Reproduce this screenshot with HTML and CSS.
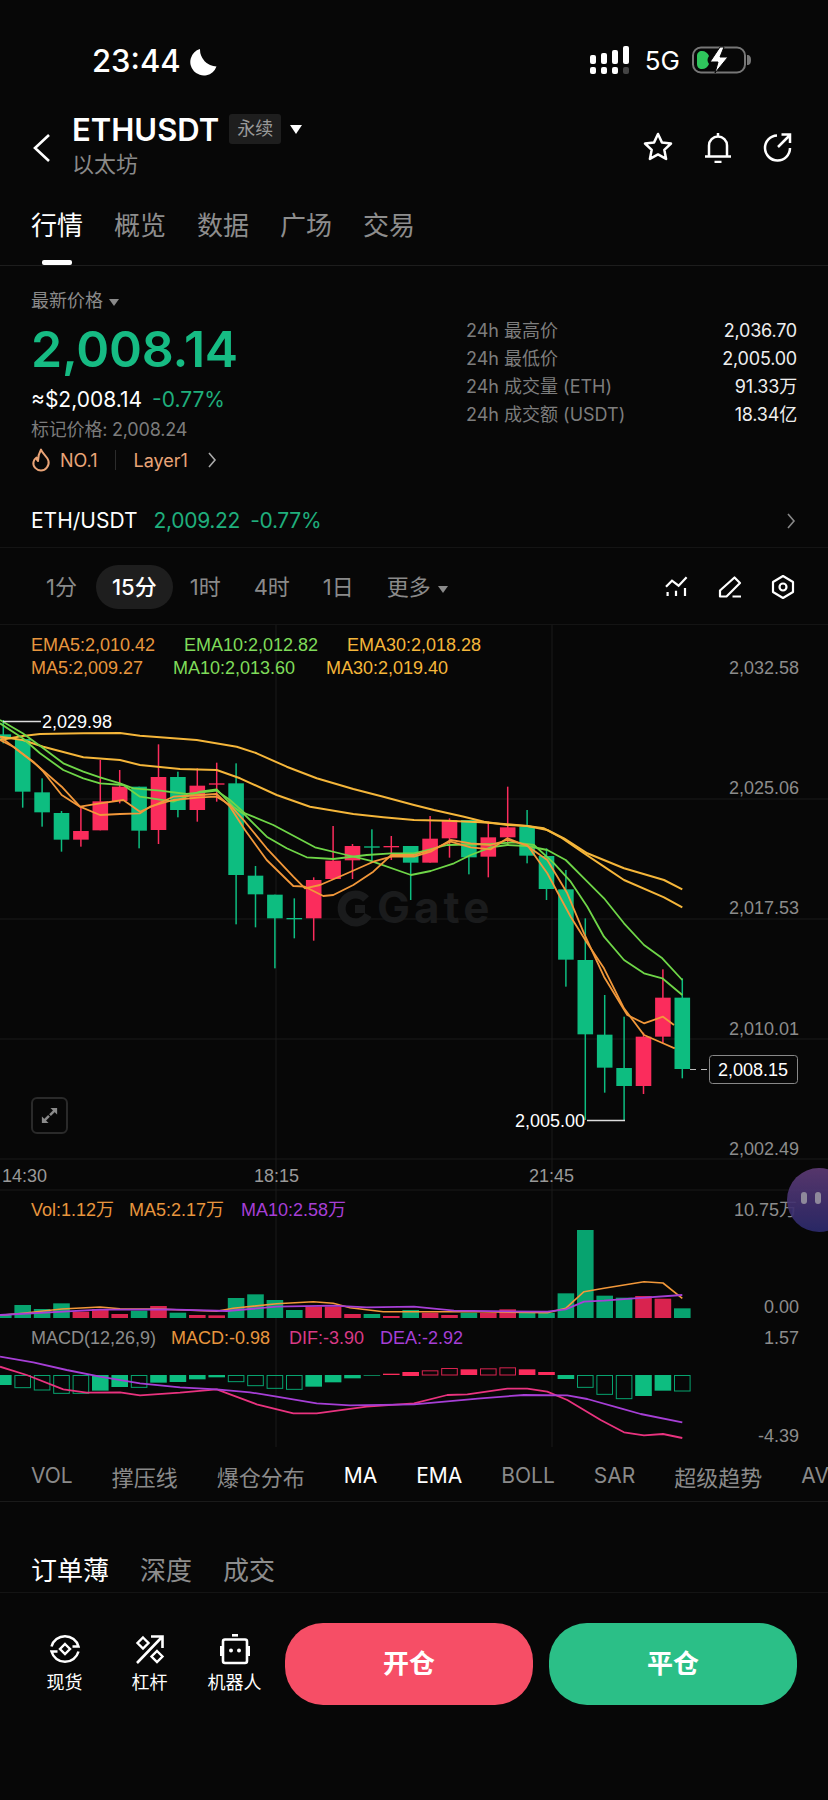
FILE: index.html
```html
<!DOCTYPE html>
<html lang="zh-CN">
<head>
  <meta charset="UTF-8">
  <meta name="viewport" content="width=device-width, initial-scale=1.0">
  <title>ETHUSDT</title>
  <link rel="stylesheet" href="styles.css">
</head>
<body>
  <div class="status-bar">
    <div class="status-time">
      <span>23:44</span>
      <svg class="moon" viewBox="0 0 28 28"><path d="M11 1A13.500 13.500 0 1 0 27.500 18.500 17 17 0 0 1 11 1z" fill="#fff"/></svg>
    </div>
    <div class="status-right">
      <svg class="signal" viewBox="0 0 42 28" fill="#fff">
        <rect x="0" y="9" width="6" height="9" rx="2"/><rect x="11" y="7" width="6" height="11" rx="2"/><rect x="22" y="4" width="6" height="14" rx="2"/><rect x="33" y="0" width="6" height="18" rx="2"/>
        <rect x="0" y="21" width="6" height="7" rx="2"/><rect x="11" y="21" width="6" height="7" rx="2"/><rect x="22" y="21" width="6" height="7" rx="2"/><rect x="33" y="21" width="6" height="7" rx="2" fill="#444"/>
      </svg>
      <span class="net">5G</span>
      <svg class="battery" viewBox="0 0 60 28">
        <rect x="1" y="1.500" width="52" height="25" rx="8" fill="none" stroke="#777" stroke-width="2"/>
        <path d="M53 9c3 0 4 2 4 5s-1 5-4 5" fill="#777" transform="translate(2 0)"/>
        <path d="M5 10c0-3 2-5 5-5s6 2 7 5c-2 3-2 5 0 8-1 3-4 5-7 5s-5-2-5-5z" fill="#2fc65c"/>
        <path d="M28 1 18 16h8l-3 11 13-16h-8l4-10z" fill="#fff" stroke="#070707" stroke-width="1"/>
      </svg>
    </div>
  </div>

  <div class="top-nav">
    <svg class="back" viewBox="0 0 20 30"><path d="M17 2 3 15l14 13" fill="none" stroke="#fff" stroke-width="2.600"/></svg>
    <div class="title-block">
      <div class="title-row">
        <span class="symbol">ETHUSDT</span>
        <span class="badge">永续</span>
        <span class="caret-big"></span>
      </div>
      <div class="subtitle">以太坊</div>
    </div>
    <div class="nav-icons">
      <svg viewBox="0 0 32 32"><path d="M16 3l3.900 8.400 9.100 1.100-6.700 6.300 1.800 9.100-8.100-4.500-8.100 4.500 1.800-9.100L3 12.500l9.100-1.100z" fill="none" stroke="#fff" stroke-width="2.500" stroke-linejoin="round"/></svg>
      <svg viewBox="0 0 32 32"><path d="M7 25V14.500a9 9 0 0 1 18 0V25M3 25.500h26M12.500 31h7M16 2v3" fill="none" stroke="#fff" stroke-width="2.500"/></svg>
      <svg viewBox="0 0 32 32"><path d="M15 4.500A12.500 12.500 0 1 0 28 17M16 16 27 5M19.500 3.500h8.500v8.500" fill="none" stroke="#fff" stroke-width="2.500"/></svg>
    </div>
  </div>

  <div class="tabs">
    <div class="tab active">行情</div>
    <div class="tab">概览</div>
    <div class="tab">数据</div>
    <div class="tab">广场</div>
    <div class="tab">交易</div>
  </div>

  <div class="overview">
    <div class="price-col">
      <div class="muted-label">最新价格 <span class="caret-small"></span></div>
      <div class="last-price">2,008.14</div>
      <div class="usd-row"><span>≈$2,008.14</span><span class="green">-0.77%</span></div>
      <div class="mark-price">标记价格: 2,008.24</div>
      <div class="tag-row">
        <svg class="flame" viewBox="0 0 20 24"><path d="M10 1.500c1 4 6 6.500 7.500 11.500 1 5-3 9.500-7.500 9.500S1.500 18.500 2.500 14c.5-2 1.500-3.500 3-4.500 0 2 .5 3 1.500 3.500C7 9 8 5 10 1.500z" fill="none" stroke="#e9a477" stroke-width="2" stroke-linejoin="round"/></svg>
        <span>NO.1</span>
        <i class="tag-sep"></i>
        <span>Layer1</span>
        <svg class="chev" viewBox="0 0 10 18"><path d="M2 2l6 7-6 7" fill="none" stroke="#aaa" stroke-width="1.600"/></svg>
      </div>
    </div>
    <div class="stats">
      <div class="stat"><span>24h 最高价</span><b>2,036.70</b></div>
      <div class="stat"><span>24h 最低价</span><b>2,005.00</b></div>
      <div class="stat"><span>24h 成交量 (ETH)</span><b>91.33万</b></div>
      <div class="stat"><span>24h 成交额 (USDT)</span><b>18.34亿</b></div>
    </div>
  </div>

  <div class="spot-row">
    <span class="spot-name">ETH/USDT</span>
    <span class="green">2,009.22</span>
    <span class="green">-0.77%</span>
    <svg class="chev spot-chev" viewBox="0 0 10 18"><path d="M2 2l6 7-6 7" fill="none" stroke="#888" stroke-width="1.600"/></svg>
  </div>

  <div class="periods">
    <span class="period">1分</span>
    <span class="period on">15分</span>
    <span class="period">1时</span>
    <span class="period">4时</span>
    <span class="period">1日</span>
    <span class="period">更多 <span class="caret-small"></span></span>
    <div class="period-icons">
      <svg viewBox="0 0 24 24"><path d="M1 11.700l6-6 6.600 5 8-8.400M2.600 17v4M11 15.700V21M20 13v8" fill="none" stroke="#fff" stroke-width="2.200"/></svg>
      <svg viewBox="0 0 24 24"><path d="M2 21.500v-6L16.500 2.500l5.500 5.500L8.500 21.500zM14.500 21.500h8.500" fill="none" stroke="#fff" stroke-width="2.200" stroke-linejoin="round"/></svg>
      <svg viewBox="0 0 24 24"><path d="M12 1l10 6v10l-10 6-10-6V7z" fill="none" stroke="#fff" stroke-width="2.200" stroke-linejoin="round"/><circle cx="12" cy="12" r="3.500" fill="none" stroke="#fff" stroke-width="2.200"/></svg>
    </div>
  </div>

  <div class="chart-wrap">
    <svg id="chart" class="chart" viewBox="0 625 828 825">
      <g class="grid">
        <path d="M0 799H828M0 919H828M0 1039H828M0 1159H828M0 1190H828M276 625V1447M552 625V1447"/>
      </g>
      <g class="watermark">
        <path d="M366 899a14 14 0 1 0 2 16" fill="none" stroke="#1a1b1c" stroke-width="8"/>
        <rect x="355" y="905" width="10" height="8" fill="#1a1b1c"/>
        <text x="377" y="923">Gate</text>
      </g>
      <g class="lbl" transform="translate(0 1.500)">
        <text x="31" y="645" fill="#e8963e">EMA5:2,010.42</text>
        <text x="184" y="645" fill="#7fdc5a">EMA10:2,012.82</text>
        <text x="347" y="645" fill="#f5b63a">EMA30:2,018.28</text>
        <text x="31" y="668" fill="#e8963e">MA5:2,009.27</text>
        <text x="173" y="668" fill="#7fdc5a">MA10:2,013.60</text>
        <text x="326" y="668" fill="#f5b63a">MA30:2,019.40</text>

        <text x="31" y="1210" fill="#e8963e">Vol:1.12万</text>
        <text x="129" y="1210" fill="#e8963e">MA5:2.17万</text>
        <text x="241" y="1210" fill="#a63fd6">MA10:2.58万</text>

        <text x="31" y="1338" fill="#8c8c8c">MACD(12,26,9)</text>
        <text x="171" y="1338" fill="#e8963e">MACD:-0.98</text>
        <text x="289" y="1338" fill="#d93a86">DIF:-3.90</text>
        <text x="380" y="1338" fill="#a63fd6">DEA:-2.92</text>

        <text x="2" y="1176" fill="#999">14:30</text>
        <text x="254" y="1176" fill="#999">18:15</text>
        <text x="529" y="1176" fill="#999">21:45</text>

        <g class="axis">
          <text x="799" y="668">2,032.58</text>
          <text x="799" y="788">2,025.06</text>
          <text x="799" y="908">2,017.53</text>
          <text x="799" y="1029">2,010.01</text>
          <text x="799" y="1149">2,002.49</text>
          <text x="797" y="1210">10.75万</text>
          <text x="799" y="1307">0.00</text>
          <text x="799" y="1338">1.57</text>
          <text x="799" y="1436">-4.39</text>
        </g>
      </g>
      <g id="plot"></g>
      <g class="lbl">
        <path d="M3 721.500H41M587 1120.500H625" stroke="#ddd" stroke-width="1.300"/>
        <text x="42" y="723" fill="#fff">2,029.98</text>
        <text x="515" y="1122" fill="#fff">2,005.00</text>
        <path d="M690 1069.500H708" stroke="#bbb" stroke-dasharray="6 5"/>
        <rect x="709.500" y="1055.500" width="88" height="28" rx="3" fill="#070707" stroke="#888"/>
        <text x="753" y="1071" fill="#fff" text-anchor="middle">2,008.15</text>
      </g>
    </svg>
    <div class="expand">
      <svg viewBox="0 0 20 20"><path d="M10.500 9.500l5-5" stroke="#8a8a8a" stroke-width="2.600"/><path d="M11 2h7v7z" fill="#8a8a8a"/><path d="M9.500 10.500l-5 5" stroke="#8a8a8a" stroke-width="2.600"/><path d="M2 11v7h7z" fill="#8a8a8a"/></svg>
    </div>
    <div class="float-ball"><i></i><i></i></div>
  </div>

  <div class="indicators">
    <span class="lat">VOL</span><span>撑压线</span><span>爆仓分布</span><span class="lat on">MA</span><span class="lat on">EMA</span><span class="lat">BOLL</span><span class="lat">SAR</span><span>超级趋势</span><span class="lat">AV</span>
  </div>

  <div class="book-tabs">
    <span class="on">订单薄</span><span>深度</span><span>成交</span>
  </div>

  <div class="actions">
    <div class="shortcut">
      <svg viewBox="0 0 32 32"><path d="M2.500 13.500a14 14 0 0 1 27 0h-6M29.500 18.500a14 14 0 0 1-27 0h6" fill="none" stroke="#fff" stroke-width="2.500"/><path d="M16 11l5 5-5 5-5-5z" fill="none" stroke="#fff" stroke-width="2.400"/></svg>
      <span>现货</span>
    </div>
    <div class="shortcut">
      <svg viewBox="0 0 32 32"><path d="M3 30 28 4M17 3.500h11.500V15" fill="none" stroke="#fff" stroke-width="2.600"/><path d="M9 4.500l5.500 5.500L9 15.500 3.500 10zM23 18l5.500 5.500L23 29l-5.500-5.500z" fill="none" stroke="#fff" stroke-width="2.400"/></svg>
      <span>杠杆</span>
    </div>
    <div class="shortcut">
      <svg viewBox="0 0 32 32"><rect x="4" y="6.500" width="24" height="23.500" rx="2" fill="none" stroke="#fff" stroke-width="2.600"/><rect x="13" y="1" width="6" height="2.600" fill="#fff"/><rect x="1" y="13" width="2.500" height="10" fill="#fff"/><rect x="28.500" y="13" width="2.500" height="10" fill="#fff"/><circle cx="12" cy="17.500" r="2" fill="#fff"/><circle cx="20" cy="17.500" r="2" fill="#fff"/></svg>
      <span>机器人</span>
    </div>
    <div class="trade-btn open">开仓</div>
    <div class="trade-btn close">平仓</div>
  </div>

  <script src="chart.js"></script>
</body>
</html>
```

FILE: styles.css
```css
* {
  box-sizing: border-box;
}
body {
  margin: 0;
  width: 828px;
  height: 1800px;
  overflow: hidden;
  background: #070707;
  color: #fff;
  font-family: Inter, "Noto Sans CJK SC", sans-serif;
}
.green {
  color: #1fae7c;
}

/* status bar */
.status-bar {
  height: 96px;
  display: flex;
  justify-content: space-between;
  padding: 46px 76px 0 92px;
}
.status-time {
  display: flex;
  align-items: flex-start;
  gap: 8px;
  font-size: 31px;
  font-weight: 500;
  line-height: 30px;
}
.moon {
  width: 28px;
  height: 28px;
  margin-top: 2px;
}
.status-right {
  display: flex;
  gap: 11px;
  height: 28px;
}
.signal {
  width: 42px;
  height: 28px;
  margin-right: 2px;
}
.net {
  font-size: 26px;
  line-height: 30px;
  margin-right: 1px;
}
.battery {
  width: 60px;
  height: 28px;
}

/* header */
.top-nav {
  height: 88px;
  display: flex;
  align-items: flex-start;
  padding: 16px 34px 0 32px;
}
.back {
  width: 20px;
  height: 30px;
  margin: 21px 20px 0 0;
}
.title-row {
  display: flex;
  align-items: center;
  height: 34px;
}
.symbol {
  font-size: 31px;
  font-weight: 600;
}
.badge {
  margin-left: 10px;
  width: 52px;
  height: 30px;
  line-height: 30px;
  text-align: center;
  background: #1e1e1e;
  border-radius: 3px;
  color: #999;
  font-size: 18px;
}
.caret-big {
  margin-left: 9px;
  border-left: 6px solid transparent;
  border-right: 6px solid transparent;
  border-top: 9px solid #fff;
}
.subtitle {
  margin-top: 3px;
  color: #8a8a8a;
  font-size: 22px;
  line-height: 30px;
}
.nav-icons {
  margin-left: auto;
  display: flex;
  gap: 28px;
  margin-top: 19px;
}
.nav-icons svg {
  width: 32px;
  height: 32px;
}

/* main tabs */
.tabs {
  height: 82px;
  display: flex;
  gap: 31px;
  padding: 22px 31px 0;
  border-bottom: 1px solid #1d1d1d;
  position: relative;
}
.tab {
  font-size: 26px;
  line-height: 40px;
  color: #8d8d8d;
}
.tab.active {
  color: #fff;
  position: relative;
}
.tab.active::after {
  content: "";
  position: absolute;
  left: 11px;
  top: 54px;
  width: 30px;
  height: 5px;
  background: #fff;
  border-radius: 2px;
}

/* price block */
.overview {
  height: 216px;
  display: flex;
  padding: 0 25px 0 31px;
}
.price-col {
  width: 437px;
  padding-top: 21px;
}
.muted-label {
  font-size: 18px;
  line-height: 28px;
  color: #8a8a8a;
}
.caret-small {
  display: inline-block;
  vertical-align: middle;
  margin-left: 1px;
  border-left: 5px solid transparent;
  border-right: 5px solid transparent;
  border-top: 7px solid #8a8a8a;
}
.last-price {
  margin-top: 4px;
  font-size: 50px;
  font-weight: 600;
  line-height: 60px;
  color: #16bb83;
  letter-spacing: -0.2px;
}
.usd-row {
  display: flex;
  gap: 10px;
  margin-top: 6px;
  font-size: 21px;
  line-height: 30px;
}
.mark-price {
  font-size: 18px;
  line-height: 30px;
  letter-spacing: -0.2px;
  color: #7c7c7c;
}
.tag-row {
  display: flex;
  align-items: center;
  height: 32px;
  margin-top: -1px;
  font-size: 18px;
  color: #e9a477;
}
.flame {
  width: 20px;
  height: 24px;
  margin-right: 9px;
}
.tag-sep {
  width: 1px;
  height: 20px;
  margin: 0 18px 0 17px;
  background: #2c2c2c;
}
.chev {
  width: 10px;
  height: 18px;
  margin-left: 13px;
}
.price-col .chev {
  margin-left: 19px;
}
.stats {
  flex: 1;
  padding: 51px 6px 0 0;
  margin-left: -2px;
}
.stat {
  display: flex;
  justify-content: space-between;
  height: 28px;
  font-size: 18px;
  line-height: 28px;
  color: #7d7d7d;
}
.stat b {
  font-weight: 400;
  color: #eee;
  letter-spacing: -0.2px;
}

/* spot row */
.spot-row {
  height: 66px;
  display: flex;
  align-items: center;
  gap: 10px;
  padding: 12px 32px 0 31px;
  font-size: 21px;
  border-bottom: 1px solid #141414;
}
.spot-name {
  margin-right: 6px;
}
.spot-row .green {
  letter-spacing: -0.3px;
}
.spot-chev {
  margin-left: auto;
}

/* period selector */
.periods {
  height: 77px;
  display: flex;
  align-items: center;
  padding: 2px 33px 0 30px;
  gap: 1px;
  font-size: 22px;
  border-bottom: 1px solid #141414;
}
.period {
  padding: 0 16px;
  height: 44px;
  line-height: 44px;
  color: #8a8a8a;
  border-radius: 22px;
}
.period.on {
  margin-left: 2px;
  color: #fff;
  background: #1e1e1e;
  font-weight: 500;
}
.period-icons {
  margin-left: auto;
  display: flex;
  gap: 29px;
}
.period-icons svg {
  width: 24px;
  height: 24px;
}

/* chart */
.chart-wrap {
  position: relative;
  height: 825px;
}
.chart {
  display: block;
  width: 828px;
  height: 825px;
}
.grid path {
  fill: none;
  stroke: #1a1a1a;
  stroke-width: 1;
}
.watermark text {
  font-size: 44px;
  font-weight: 700;
  letter-spacing: 4px;
  fill: #1a1b1c;
}
.lbl text {
  font-family: "Liberation Sans", "Noto Sans CJK SC", sans-serif;
  font-size: 18px;
  dominant-baseline: middle;
}
.axis text {
  fill: #8c8c8c;
  text-anchor: end;
}
.expand {
  position: absolute;
  left: 31px;
  top: 472px;
  width: 37px;
  height: 37px;
  padding: 7px;
  border: 2px solid #2a2a2a;
  border-radius: 6px;
}
.expand svg {
  display: block;
}
.float-ball {
  position: absolute;
  left: 787px;
  top: 543px;
  width: 64px;
  height: 64px;
  border-radius: 50%;
  background: linear-gradient(#5d3a74, #2c2a6c);
  opacity: 0.92;
  display: flex;
  gap: 8px;
  padding: 24px 0 0 14px;
}
.float-ball i {
  width: 6px;
  height: 12px;
  border-radius: 3px;
  background: #9a95a8;
}

/* indicator strip */
.indicators {
  height: 52px;
  display: flex;
  gap: 39px;
  align-items: center;
  padding-left: 31px;
  font-size: 22px;
  color: #8a8a8a;
  white-space: nowrap;
  border-bottom: 1px solid #1a1a1a;
  overflow: hidden;
}
.indicators .lat {
  font-size: 21px;
}
.indicators .on {
  color: #fff;
}

/* order book tabs */
.book-tabs {
  height: 91px;
  display: flex;
  gap: 31px;
  padding: 49px 31px 0;
  font-size: 26px;
  line-height: 40px;
  color: #8d8d8d;
  border-bottom: 1px solid #141414;
}
.book-tabs .on {
  color: #fff;
}

/* bottom bar */
.actions {
  display: flex;
  padding: 30px 31px 0 37px;
}
.shortcut {
  width: 55px;
  margin-right: 30px;
  display: flex;
  flex-direction: column;
  align-items: center;
  font-size: 18px;
  line-height: 26px;
}
.shortcut svg {
  width: 32px;
  height: 32px;
  margin: 10px 0 5px;
}
.shortcut span {
  white-space: nowrap;
}
.trade-btn {
  width: 248px;
  height: 82px;
  line-height: 82px;
  text-align: center;
  border-radius: 38px;
  font-size: 26px;
  font-weight: 700;
}
.trade-btn.open {
  background: #f64e66;
  margin-left: -7px;
}
.trade-btn.close {
  background: #2bbf87;
  margin-left: 16px;
}
```

FILE: chart.js
```js
// Everything is in page pixels: the svg viewBox starts at y=625, so values match the screen.
const NS = 'http://www.w3.org/2000/svg';
const plot = document.getElementById('plot');

const GREEN = '#0dbd80';
const RED = '#fb2c5c';
const VOL_GREEN = '#07a36f';
const VOL_RED = '#d9234f';

const centerX = i => 22.7 + 19.4 * i;

function add(tag, attrs) {
  const el = document.createElementNS(NS, tag);
  for (const k in attrs) el.setAttribute(k, attrs[k]);
  plot.appendChild(el);
}

// [index, color, wickTop, bodyTop, bodyBottom, wickBottom], y read off at 640 + v/3 (left part)
const leftCandles = [
  [-1, 'g', 240, 283, 297, 310], [0, 'g', 297, 297, 455, 503], [1, 'g', 415, 457, 517, 560],
  [2, 'g', 513, 519, 599, 635], [3, 'r', 500, 573, 599, 620], [4, 'r', 360, 484, 571, 571],
  [5, 'r', 390, 440, 483, 490], [6, 'g', 440, 440, 572, 625], [7, 'r', 313, 411, 570, 612],
  [8, 'g', 395, 411, 510, 532], [9, 'r', 385, 437, 510, 545], [10, 'r', 368, 430, 434, 485],
  [11, 'g', 370, 430, 705, 853], [12, 'g', 678, 707, 763, 862], [13, 'g', 764, 764, 835, 985],
  [14, 'g', 775, 834, 838, 895], [15, 'r', 712, 720, 835, 902], [16, 'r', 558, 662, 717, 717],
  [17, 'r', 612, 618, 661, 717], [18, 'g', 568, 619, 623, 668], [19, 'r', 588, 618, 622, 660],
  [20, 'g', 618, 618, 668, 780]
];
// same, y at 760 + v/3 (right part)
const rightCandles = [
  [21, 'r', 168, 236, 308, 308], [22, 'r', 175, 180, 235, 293], [23, 'g', 180, 180, 292, 343],
  [24, 'r', 185, 232, 290, 352], [25, 'r', 80, 202, 232, 258], [26, 'g', 150, 200, 287, 310],
  [27, 'g', 265, 288, 387, 420], [28, 'g', 330, 388, 599, 680], [29, 'g', 475, 600, 823, 1080],
  [30, 'g', 705, 824, 923, 998], [31, 'g', 770, 924, 978, 1080], [32, 'r', 818, 830, 978, 1002],
  [33, 'r', 628, 713, 830, 850], [34, 'g', 655, 713, 927, 955]
];

function drawCandle(c, base) {
  const x = centerX(c[0]);
  const color = c[1] === 'g' ? GREEN : RED;
  const y = v => base + v / 3;
  add('rect', { x: x - 0.75, y: y(c[2]), width: 1.5, height: (c[5] - c[2]) / 3, fill: color });
  add('rect', { x: x - 7.8, y: y(c[3]), width: 15.6, height: (c[4] - c[3]) / 3, fill: color });
}

// volume tops, baseline 1318, y at 1160 + v/3
const volumes = [
  ['g', 462], ['g', 435], ['g', 447], ['g', 430], ['r', 455], ['r', 447], ['r', 462], ['g', 452],
  ['r', 438], ['g', 458], ['r', 465], ['r', 466], ['g', 414], ['g', 403], ['g', 420], ['g', 450],
  ['r', 440], ['r', 440], ['r', 462], ['g', 462], ['r', 468], ['g', 450], ['r', 458], ['r', 465],
  ['g', 458], ['r', 458], ['r', 448], ['g', 458], ['g', 458], ['g', 400], ['g', 210], ['g', 407],
  ['g', 413], ['r', 408], ['r', 416], ['g', 445]
];
volumes.forEach((v, n) => {
  const top = 1160 + v[1] / 3;
  add('rect', {
    x: centerX(n - 1) - 8.3, y: top, width: 16.6, height: 1318 - top,
    fill: v[0] === 'g' ? VOL_GREEN : VOL_RED
  });
});

// macd bars: color, top, bottom, hollow; y at 1160 + v/3, zero line at 645
const macd = [
  ['g', 645, 675, 0], ['g', 645, 683, 1], ['g', 645, 690, 1], ['g', 645, 700, 1], ['g', 645, 700, 1],
  ['g', 645, 692, 0], ['g', 645, 681, 0], ['g', 645, 682, 1], ['g', 645, 668, 0], ['g', 645, 666, 0],
  ['g', 645, 658, 0], ['g', 645, 652, 0], ['g', 645, 665, 1], ['g', 645, 677, 1], ['g', 645, 685, 1],
  ['g', 645, 688, 1], ['g', 645, 680, 0], ['g', 645, 667, 0], ['g', 645, 655, 0], ['g', 645, 647, 0],
  ['r', 641, 645, 0], ['r', 636, 648, 0], ['r', 631, 645, 1], ['r', 624, 645, 1], ['r', 628, 645, 0],
  ['r', 625, 645, 1], ['r', 622, 645, 1], ['r', 628, 645, 0], ['r', 636, 645, 0], ['g', 645, 657, 0],
  ['g', 645, 682, 1], ['g', 645, 703, 1], ['g', 645, 716, 1], ['g', 645, 708, 0], ['g', 645, 692, 0],
  ['g', 645, 693, 1]
];
macd.forEach((m, n) => {
  const top = 1160 + m[1] / 3;
  const h = (m[2] - m[1]) / 3;
  const color = m[0] === 'g' ? GREEN : RED;
  if (m[3]) {
    add('rect', { x: centerX(n - 1) - 7.8, y: top + 0.5, width: 15.6, height: h - 0.5, fill: 'none', stroke: color === GREEN ? VOL_GREEN : VOL_RED });
  } else {
    add('rect', { x: centerX(n - 1) - 8.3, y: top, width: 16.6, height: h, fill: color });
  }
});

leftCandles.forEach(c => drawCandle(c, 640));
rightCandles.forEach(c => drawCandle(c, 760));

// line points come in two runs: x/3 on the left half, 414 + x/3 on the right half
function line(color, width, baseL, left, baseR, right) {
  const pts = [];
  for (let i = 0; i < left.length; i += 2) pts.push((left[i] / 3).toFixed(1) + ',' + (baseL + left[i + 1] / 3).toFixed(1));
  for (let i = 0; i < right.length; i += 2) pts.push((414 + right[i] / 3).toFixed(1) + ',' + (baseR + right[i + 1] / 3).toFixed(1));
  add('polyline', { points: pts.join(' '), fill: 'none', stroke: color, 'stroke-width': width, 'stroke-linejoin': 'round' });
}

const ORANGE = '#f2983a';
const LIME = '#6fd648';
const AMBER = '#f5b63a';
const PURPLE = '#a63fd6';
const PINK = '#e9337f';

// main chart averages
line(AMBER, 2, 640,
  [0, 300, 68, 288, 120, 282, 250, 280, 360, 279, 420, 287, 590, 300, 710, 320, 770, 340, 860, 380, 950, 415, 1060, 447, 1150, 470],
  760, [0, 135, 60, 150, 150, 170, 210, 185, 280, 195, 340, 198, 400, 210, 450, 235, 520, 280, 630, 325, 750, 360, 805, 388]);
line(AMBER, 2, 640,
  [0, 290, 68, 300, 130, 320, 250, 352, 360, 360, 420, 375, 540, 387, 650, 390, 720, 415, 830, 465, 930, 500, 1060, 522, 1150, 532],
  760, [0, 180, 100, 182, 200, 187, 280, 193, 340, 198, 390, 205, 440, 232, 510, 280, 570, 320, 630, 360, 750, 412, 805, 442]);
line(LIME, 1.8, 640,
  [0, 240, 68, 280, 130, 325, 190, 370, 250, 395, 300, 412, 360, 430, 400, 445, 480, 452, 560, 462, 650, 452, 690, 480, 735, 520, 820, 555, 945, 622, 1040, 645, 1110, 662, 1233, 705],
  760, [50, 333, 120, 310, 170, 285, 230, 262, 280, 255, 340, 258, 400, 270, 455, 300, 520, 365, 570, 415, 630, 490, 690, 555, 745, 595, 805, 660]);
line(LIME, 1.8, 640,
  [0, 250, 68, 295, 120, 340, 190, 390, 250, 415, 300, 430, 370, 435, 420, 470, 520, 485, 600, 455, 650, 448, 700, 500, 735, 525, 800, 590, 860, 625, 920, 652, 1000, 657, 1100, 645, 1174, 640],
  760, [0, 280, 100, 255, 230, 252, 300, 247, 360, 255, 420, 310, 470, 365, 520, 440, 570, 530, 630, 600, 690, 640, 745, 655, 805, 705]);
line(ORANGE, 1.8, 640,
  [0, 290, 40, 320, 100, 365, 130, 395, 185, 465, 240, 500, 300, 490, 370, 480, 420, 515, 520, 470, 600, 465, 650, 462, 690, 500, 735, 570, 800, 660, 880, 738, 915, 740, 970, 768, 1000, 765, 1060, 735, 1120, 695, 1174, 645],
  760, [0, 285, 50, 270, 110, 245, 170, 262, 230, 268, 280, 235, 340, 258, 400, 300, 460, 400, 510, 520, 570, 650, 640, 765, 690, 790, 747, 770, 780, 795]);
line(ORANGE, 1.8, 640,
  [0, 300, 40, 320, 110, 375, 185, 440, 240, 500, 300, 525, 360, 522, 420, 520, 450, 500, 520, 480, 600, 472, 650, 470, 690, 495, 735, 545, 800, 625, 880, 710, 915, 745, 960, 735, 1030, 705, 1120, 665, 1174, 650],
  760, [0, 290, 50, 275, 110, 240, 170, 250, 230, 255, 280, 240, 340, 255, 400, 340, 470, 470, 520, 550, 570, 625, 630, 745, 690, 825, 747, 850, 782, 865]);

// volume averages
line(ORANGE, 1.6, 1160,
  [0, 466, 68, 460, 185, 447, 300, 441, 360, 446, 470, 447, 650, 454, 700, 445, 830, 431, 940, 425, 1000, 430, 1050, 443, 1150, 455],
  1160, [0, 455, 200, 455, 400, 458, 455, 445, 510, 395, 570, 385, 690, 365, 747, 369, 805, 415]);
line(PURPLE, 1.8, 1160,
  [0, 465, 300, 449, 500, 448, 680, 453, 830, 440, 1000, 437, 1100, 442],
  1160, [0, 440, 120, 452, 400, 455, 455, 448, 510, 425, 570, 422, 660, 415, 805, 405]);

// macd lines
line(PINK, 1.8, 1160,
  [0, 620, 80, 645, 190, 688, 260, 698, 360, 697, 420, 706, 540, 698, 650, 688, 770, 733, 880, 760, 950, 760, 1100, 740],
  1160, [0, 730, 100, 705, 160, 703, 280, 686, 340, 686, 400, 695, 460, 720, 560, 780, 630, 817, 690, 826, 747, 822, 805, 834]);
line(PURPLE, 1.8, 1160,
  [0, 590, 100, 607, 200, 630, 300, 650, 420, 670, 540, 682, 650, 688, 750, 697, 830, 710, 950, 730, 1050, 736],
  1160, [0, 733, 200, 715, 330, 705, 460, 706, 520, 717, 620, 745, 680, 762, 805, 787]);
```
